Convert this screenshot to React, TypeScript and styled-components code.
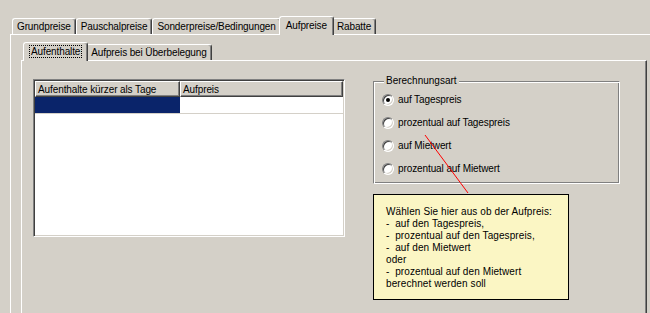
import React from 'react'
import styled, { createGlobalStyle } from 'styled-components'

const GlobalStyle = createGlobalStyle`
  html, body {
    margin: 0;
    padding: 0;
    background: #d4d0c8;
    overflow: hidden;
  }
  body {
    font-family: "Liberation Sans", Arial, sans-serif;
    font-size: 10px;
    color: #000;
  }
`

const Screen = styled.div`
  position: relative;
  width: 650px;
  height: 313px;
  box-sizing: border-box;
  padding: 16px 0 0 10px;
  overflow: hidden;
`

const TabControl = styled.div<{ $width: number; $height: number }>`
  display: flex;
  flex-direction: column;
  width: ${(p) => p.$width}px;
  height: ${(p) => p.$height}px;
`

const TabStrip = styled.div<{ $inset: number }>`
  display: flex;
  align-items: flex-end;
  height: 18px;
  padding-left: ${(p) => p.$inset}px;
  position: relative;
  z-index: 2;
  letter-spacing: -0.12px;
`

const Tab = styled.div<{ $active?: boolean }>`
  box-sizing: border-box;
  height: ${(p) => (p.$active ? 19 : 16)}px;
  margin: 0 ${(p) => (p.$active ? -2 : 0)}px ${(p) => (p.$active ? -1 : 0)}px;
  padding: 0 ${(p) => (p.$active ? 6 : 4)}px 1px;
  display: flex;
  align-items: center;
  white-space: nowrap;
  background: #d4d0c8;
  border-top: 1px solid #fff;
  border-left: 1px solid #fff;
  border-right: 1px solid #404040;
  border-radius: 3px 3px 0 0;
  box-shadow: inset -1px 0 0 #808080;
  position: relative;
  z-index: ${(p) => (p.$active ? 2 : 1)};
`

const FocusLabel = styled.span`
  outline: 1px dotted #000;
  outline-offset: 0;
  padding: 0 1px;
`

const TabPanel = styled.div<{ $pad: string }>`
  flex: 1;
  box-sizing: border-box;
  padding: ${(p) => p.$pad};
  background: #d4d0c8;
  border-top: 1px solid #fff;
  border-left: 1px solid #fff;
  border-right: 1px solid #404040;
  box-shadow: inset -1px 0 0 #808080;
`

const ContentRow = styled.div`
  display: flex;
  align-items: flex-start;
`

const Grid = styled.div`
  box-sizing: border-box;
  width: 312px;
  height: 158px;
  background: #fff;
  border: 1px solid;
  border-color: #808080 #fff #fff #808080;
  box-shadow: inset 1px 1px 0 #404040, inset -1px -1px 0 #d4d0c8;
  padding: 1px;
  display: flex;
  flex-direction: column;
`

const GridRow = styled.div`
  display: flex;
`

const HeaderCell = styled.div<{ $width?: number }>`
  box-sizing: border-box;
  ${(p) => (p.$width ? `width: ${p.$width}px;` : 'flex: 1;')}
  height: 16px;
  padding: 0 2px;
  display: flex;
  align-items: center;
  background: #d4d0c8;
  border-top: 1px solid #fff;
  border-left: 1px solid #fff;
  border-right: 1px solid #404040;
  border-bottom: 1px solid #404040;
  box-shadow: inset -1px -1px 0 #808080;
  white-space: nowrap;
  letter-spacing: -0.1px;
`

const Cell = styled.div<{ $width?: number; $selected?: boolean }>`
  box-sizing: border-box;
  ${(p) => (p.$width ? `width: ${p.$width}px;` : 'flex: 1;')}
  height: 17px;
  background: ${(p) => (p.$selected ? '#0a246a' : '#fff')};
  border-bottom: 1px solid #d4d0c8;
`

const RightColumn = styled.div`
  margin-left: 28px;
  margin-top: -4px;
  display: flex;
  flex-direction: column;
`

const GroupBox = styled.fieldset`
  box-sizing: border-box;
  width: 247px;
  margin: 0;
  padding: 1px 0 3px 8px;
  border: 1px solid;
  border-color: #808080 #fff #fff #808080;
  box-shadow: inset 1px 1px 0 #fff, inset -1px -1px 0 #808080;
`

const GroupTitle = styled.legend`
  margin-left: 2px;
  padding: 0 2px;
  line-height: 12px;
  background: #d4d0c8;
`

const RadioRow = styled.label`
  display: flex;
  align-items: center;
  gap: 4px;
  height: 23px;
  letter-spacing: -0.1px;
`

const RadioCircle = styled.span<{ $checked?: boolean }>`
  box-sizing: border-box;
  width: 12px;
  height: 12px;
  border-radius: 50%;
  background: #fff;
  border: 1px solid;
  border-color: #808080 #fff #fff #808080;
  box-shadow: inset 1px 1px 0 #404040, inset -1px -1px 0 #d4d0c8;
  display: flex;
  align-items: center;
  justify-content: center;

  &::after {
    content: '';
    display: ${(p) => (p.$checked ? 'block' : 'none')};
    width: 4px;
    height: 4px;
    border-radius: 50%;
    background: #000;
  }
`

const Note = styled.div`
  box-sizing: border-box;
  width: 196px;
  height: 106px;
  margin-top: 10px;
  padding: 11px 0 0 12px;
  background: #fbf6c4;
  border: 1px solid #000;
  font-size: 10px;
  line-height: 12px;
  letter-spacing: 0.1px;
  white-space: pre;
`

const Pointer = styled.svg`
  position: absolute;
  left: 0;
  top: 0;
  pointer-events: none;
`

const outerTabs = ['Grundpreise', 'Pauschalpreise', 'Sonderpreise/Bedingungen', 'Aufpreise', 'Rabatte']
const options = ['auf Tagespreis', 'prozentual auf Tagespreis', 'auf Mietwert', 'prozentual auf Mietwert']

const noteText = [
  'Wählen Sie hier aus ob der Aufpreis:',
  '-  auf den Tagespreis,',
  '-  prozentual auf den Tagespreis,',
  '-  auf den Mietwert',
  'oder',
  '-  prozentual auf den Mietwert',
  'berechnet werden soll',
].join('\n')

const App: React.FC = () => {
  return (
    <Screen>
      <GlobalStyle />
      <TabControl $width={660} $height={340}>
        <TabStrip $inset={2}>
          {outerTabs.map((t) => (
            <Tab key={t} $active={t === 'Aufpreise'}>
              {t}
            </Tab>
          ))}
        </TabStrip>
        <TabPanel $pad="7px 0 0 10px">
          <TabControl $width={626} $height={320}>
            <TabStrip $inset={4}>
              <Tab $active>
                <FocusLabel>Aufenthalte</FocusLabel>
              </Tab>
              <Tab>Aufpreis bei Überbelegung</Tab>
            </TabStrip>
            <TabPanel $pad="18px 0 0 11px">
              <ContentRow>
                <Grid>
                  <GridRow>
                    <HeaderCell $width={145}>Aufenthalte kürzer als Tage</HeaderCell>
                    <HeaderCell>Aufpreis</HeaderCell>
                  </GridRow>
                  <GridRow>
                    <Cell $width={145} $selected />
                    <Cell />
                  </GridRow>
                </Grid>
                <RightColumn>
                  <GroupBox>
                    <GroupTitle>Berechnungsart</GroupTitle>
                    {options.map((o, i) => (
                      <RadioRow key={o}>
                        <RadioCircle $checked={i === 0} />
                        {o}
                      </RadioRow>
                    ))}
                  </GroupBox>
                  <Note>{noteText}</Note>
                </RightColumn>
              </ContentRow>
            </TabPanel>
          </TabControl>
        </TabPanel>
      </TabControl>
      <Pointer width={650} height={313}>
        <line x1={425} y1={135} x2={468} y2={193} stroke="#ff0000" strokeWidth={1} />
      </Pointer>
    </Screen>
  )
}

export default App
